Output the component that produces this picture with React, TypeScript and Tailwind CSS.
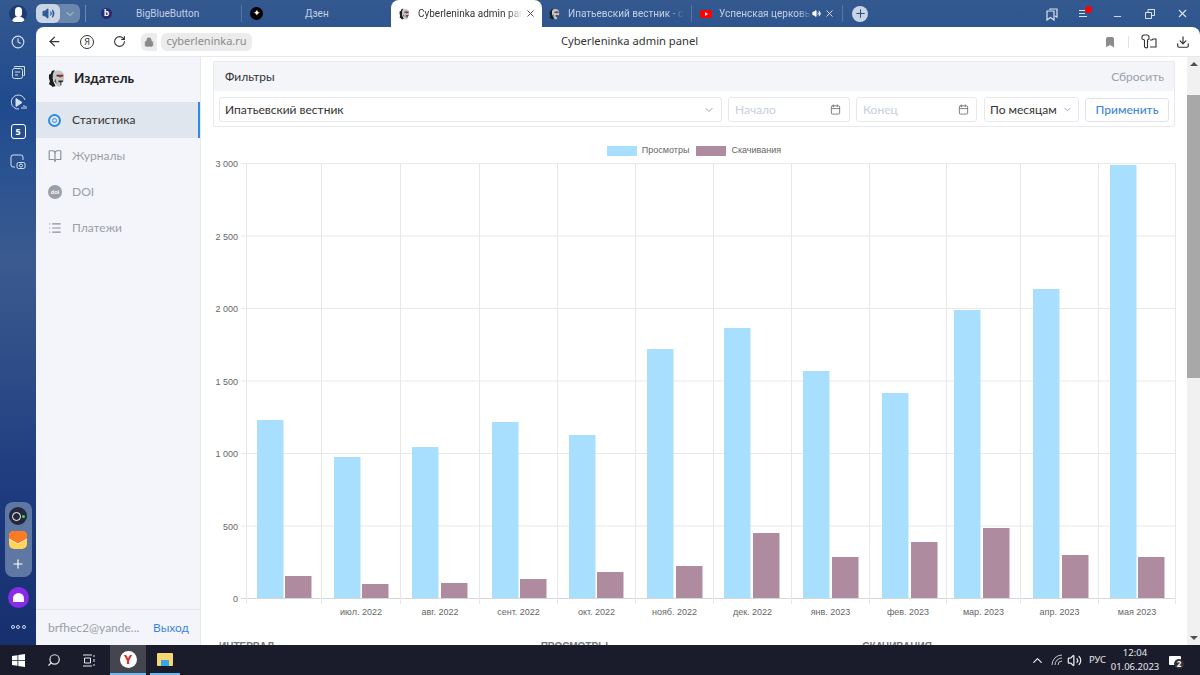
import { ArrowLeft, BookOpen, Bookmark, Calendar, ChevronDown, ChevronUp, Clock, Download, List, Lock, Minus, Plus, RotateCw, Search, Volume2, X } from 'lucide-react';

const months = ['', 'июл. 2022', 'авг. 2022', 'сент. 2022', 'окт. 2022', 'нояб. 2022', 'дек. 2022', 'янв. 2023', 'фев. 2023', 'мар. 2023', 'апр. 2023', 'мая 2023'];
const gridX = [246.5, 321.5, 400.5, 479.5, 557.5, 635.5, 713.5, 791.5, 869.5, 946.5, 1020.5, 1098.5, 1175.5];
const viewBars = [
  [257, 420], [334, 457], [412, 447], [492, 422], [569, 435], [647, 349],
  [724, 328], [803, 371], [882, 393], [954, 310], [1033, 289], [1110, 165],
];
const downloadBars = [
  [285, 576], [362, 584], [441, 583], [520, 579], [597, 572], [676, 566],
  [753, 533], [832, 557], [911, 542], [983, 528], [1062, 555], [1138, 557],
];
const yTicks = [
  ['3 000', 163.5], ['2 500', 236], ['2 000', 308.5], ['1 500', 381], ['1 000', 453.5], ['500', 526], ['0', 598.5],
] as const;

function Skull({ size = 14 }: { size?: number }) {
  return (
    <svg width={size} height={size} viewBox="0 0 20 20" className="shrink-0">
      <path d="M1 6l2-1 1-3 3-1-1 5-1 4 1 4 2 4-3 1-2-2-2-1 1-3-1-3z" fill="#1d1d1d" />
      <path d="M6 3c2-2 7-2 9 0 2 2 2 5 2 7l-1 3-2 1v3l-2 2-3-1-2-4-2-4 0-4z" fill="#c4c6c8" />
      <path d="M9 6h7v2h-7z" fill="#3a3a3a" />
      <circle cx="13" cy="7.500" r="1.500" fill="#d81f1f" />
      <path d="M11 12h5v1l-1 1h-1v3h-1v-3h-2z" fill="#2c2c2c" />
      <path d="M8 10l1 6-2-3z" fill="#4d4d4d" />
    </svg>
  );
}

function Tabs() {
  return (
    <div className="flex h-[27px] items-center text-[10px] text-[#c3d0e4] font-['Roboto',sans-serif]">
      <div className="flex h-[19px] w-[44px] items-center rounded-md bg-[#6b86ad]">
        <div className="flex h-[19px] w-[24px] items-center justify-center rounded-md bg-[#c9d4e4]">
          <Volume2 size={13} className="text-[#2f5a96]" fill="#2f5a96" />
        </div>
        <ChevronDown size={12} className="ml-[4px] text-[#c9d4e4]" />
      </div>
      <div className="ml-[5px] h-[17px] w-px bg-[#6f8ab0]" />
      <div className="ml-[15px] flex h-[11px] w-[11px] items-center justify-center rounded-full bg-[#2a2a70] text-[9px] font-bold leading-none text-white">b</div>
      <span className="ml-[24px] w-[62px] whitespace-nowrap">BigBlueButton</span>
      <div className="ml-[43px] h-[17px] w-px bg-[#55749f]" />
      <div className="ml-[8px] flex h-[13px] w-[13px] items-center justify-center rounded-full bg-black text-[9px] leading-none text-white">✦</div>
      <span className="ml-[42px] w-[22px]">Дзен</span>
      <div className="ml-[64px] flex h-[27px] w-[151px] items-center rounded-t-lg bg-white pl-[8px] text-[#333]">
        <Skull size={12} />
        <span className="ml-[7px] w-[105px] overflow-hidden whitespace-nowrap [mask-image:linear-gradient(90deg,#000_85%,transparent)]">Cyberleninka admin panel</span>
        <X size={11} className="ml-[2px] text-[#444]" />
      </div>
      <div className="ml-[7px]"><Skull size={12} /></div>
      <span className="ml-[7px] w-[117px] overflow-hidden whitespace-nowrap [mask-image:linear-gradient(90deg,#000_85%,transparent)]">Ипатьевский вестник - статистика</span>
      <div className="ml-[6px] h-[17px] w-px bg-[#55749f]" />
      <div className="ml-[8px] flex h-[8px] w-[12px] items-center justify-center rounded-[2px] bg-[#f00]">
        <div className="h-0 w-0 border-y-[2px] border-l-[3px] border-y-transparent border-l-white" />
      </div>
      <span className="ml-[7px] w-[93px] overflow-hidden whitespace-nowrap [mask-image:linear-gradient(90deg,#000_85%,transparent)]">Успенская церковь села</span>
      <Volume2 size={9} className="text-white" fill="#fff" />
      <X size={11} className="ml-[3px] text-[#dde5f0]" />
      <div className="ml-[7px] h-[17px] w-px bg-[#55749f]" />
      <div className="ml-[9px] flex h-[16px] w-[16px] items-center justify-center rounded-full bg-[#c9d4e4]">
        <Plus size={13} className="text-[#2f4f80]" />
      </div>
      <div className="ml-auto flex items-center text-[#dbe3ef]">
        <svg width="14" height="14" viewBox="0 0 14 14" fill="none" stroke="currentColor" strokeWidth="1.2">
          <path d="M5 3V2h7v8l-2-1" />
          <path d="M2 4h7v9l-3.5-2.5L2 13z" />
        </svg>
        <div className="relative ml-[20px] flex w-[13px] flex-col gap-[2px]">
          <div className="h-px w-[8px] bg-current" />
          <div className="h-px w-[6px] bg-current" />
          <div className="h-px w-[8px] bg-current" />
          <div className="absolute left-[6px] top-[-4px] h-[7px] w-[7px] rounded-full bg-[#f00]" />
        </div>
        <Minus size={11} className="ml-[20px] mt-[6px]" />
        <svg width="10" height="10" viewBox="0 0 10 10" fill="none" stroke="currentColor" className="ml-[22px]">
          <path d="M.5 3.5h6v6h-6zM3 3V.5h6.5v6H7" />
        </svg>
        <X size={13} className="ml-[21px] mr-[11px]" />
      </div>
    </div>
  );
}

function AddressBar() {
  return (
    <div className="flex h-[30px] shrink-0 items-center border-b border-[#e8e9ee] text-[#333]">
      <ArrowLeft size={15} className="ml-[11px]" />
      <div className="ml-[18px] flex h-[14px] w-[14px] items-center justify-center rounded-full border border-[#333] text-[9px] leading-none">Я</div>
      <RotateCw size={13} className="ml-[19px]" />
      <div className="ml-[15px] flex h-[18px] w-[16px] items-center justify-center rounded-l-md bg-[#ececec]">
        <Lock size={10} className="text-[#8a8a8a]" fill="#8a8a8a" />
      </div>
      <div className="ml-[4px] flex h-[18px] w-[91px] items-center justify-center rounded-md bg-[#ececec] text-[11px] text-[#8b8b8b] font-['Noto_Sans',sans-serif]">cyberleninka.ru</div>
      <div className="flex-1 pr-[97px] text-center text-[11.200px] text-[#333] font-['Noto_Sans',sans-serif]">Cyberleninka admin panel</div>
      <Bookmark size={12} className="text-[#8c8c8c]" fill="#8c8c8c" />
      <div className="ml-[12px] h-[12px] w-px bg-[#e2e2e2]" />
      <svg width="16" height="15" viewBox="0 0 16 15" fill="none" stroke="#333" strokeWidth="1.1" className="ml-[12px]">
        <path d="M1 3a2 2 0 0 1 2-2h3a2 2 0 0 1 2 2v2L6.500 6v7.500L5 14 3.500 13V6L1 5z" />
        <path d="M9 6h2l1-1h3v8H9" />
      </svg>
      <Download size={14} className="ml-[19px] mr-[10px] text-[#333]" />
    </div>
  );
}

function Sidebar() {
  return (
    <aside className="flex w-[165px] shrink-0 flex-col border-r border-[#e6e8ef] bg-[#f3f5fa] font-['Lato','Noto_Sans',sans-serif]">
      <div className="flex h-[45px] shrink-0 items-center pb-[2px] pl-[12px]">
        <Skull size={19} />
        <span className="ml-[7px] text-[13.500px] font-bold text-[#222]">Издатель</span>
      </div>
      <div className="flex h-[36px] items-center border-r-2 border-[#2b8be8] bg-[#e0e6ee] pl-[12px] text-[12px] text-[#333]">
        <div className="flex h-[13px] w-[13px] items-center justify-center rounded-full border-[2px] border-[#2b8be8]">
          <div className="h-[5px] w-[5px] rounded-full border border-[#2b8be8]" />
        </div>
        <span className="ml-[11px]">Статистика</span>
      </div>
      <div className="flex h-[36px] items-center pl-[12px] text-[12px] text-[#9a9ea6]">
        <BookOpen size={14} className="text-[#8b8f96]" />
        <span className="ml-[10px]">Журналы</span>
      </div>
      <div className="flex h-[36px] items-center pl-[12px] text-[12px] text-[#9a9ea6]">
        <div className="flex h-[14px] w-[14px] items-center justify-center rounded-full bg-[#9a9ea6] text-[6px] font-bold leading-none text-white">doi</div>
        <span className="ml-[10px]">DOI</span>
      </div>
      <div className="flex h-[36px] items-center pl-[12px] text-[12px] text-[#9a9ea6]">
        <List size={14} className="text-[#8b8f96]" />
        <span className="ml-[10px]">Платежи</span>
      </div>
      <div className="mt-auto flex h-[36px] items-center border-t border-[#e3e5ec] pl-[12px] text-[12px]">
        <span className="w-[105px] text-[#9a9ea6]">brfhec2@yande...</span>
        <span className="text-[#3d86e0]">Выход</span>
      </div>
    </aside>
  );
}

function Filters() {
  return (
    <div className="mx-[12px] mt-[4px] rounded-[2px] border border-[#e7e9ef] font-['Lato','Noto_Sans',sans-serif] text-[12px]">
      <div className="flex h-[29px] items-center justify-between bg-[#f3f5f8] pl-[11px] pr-[10px]">
        <span className="text-[#333]">Фильтры</span>
        <span className="text-[#9ca1a8]">Сбросить</span>
      </div>
      <div className="flex h-[35px] items-center gap-[6px] px-[5px] pt-[2px]">
        <div className="flex h-[25px] w-[503px] items-center justify-between rounded-[3px] border border-[#e6e8ee] pl-[5px] pr-[6px] text-[#333]">
          Ипатьевский вестник
          <ChevronDown size={12} className="text-[#9a9ea6]" />
        </div>
        <div className="flex h-[25px] w-[122px] items-center justify-between rounded-[3px] border border-[#e6e8ee] pl-[6px] pr-[8px] text-[#c6d0dc]">
          Начало
          <Calendar size={11} className="text-[#777]" />
        </div>
        <div className="flex h-[25px] w-[121px] items-center justify-between rounded-[3px] border border-[#e6e8ee] pl-[6px] pr-[7px] text-[#c6d0dc]">
          Конец
          <Calendar size={11} className="text-[#777]" />
        </div>
        <div className="ml-px flex h-[25px] w-[95px] items-center justify-between whitespace-nowrap rounded-[3px] border border-[#e6e8ee] pl-[5px] pr-[5px] text-[#333]">
          По месяцам
          <ChevronDown size={11} className="text-[#9a9ea6]" />
        </div>
        <div className="flex h-[24px] w-[84px] items-center justify-center rounded-[3px] border border-[#dfe3ea] font-medium text-[#3d86e0]">Применить</div>
      </div>
    </div>
  );
}

function Chart() {
  return (
    <div className="font-['Liberation_Sans',sans-serif]">
      <div className="mt-[16px] flex h-[15px] items-center justify-center gap-[5px] text-[9px] text-[#666]">
        <div className="h-[10px] w-[30px] bg-[#a9dffe]" />
        <span>Просмотры</span>
        <div className="ml-[2px] h-[10px] w-[30px] bg-[#af8b9f]" />
        <span>Скачивания</span>
      </div>
      <svg width="986" height="473" viewBox="201 158 986 473" className="block">
        {yTicks.map(([label, y]) => (
          <g key={label}>
            <line x1="241" x2="1175.5" y1={y} y2={y} stroke={label === '0' ? '#d6d6d6' : '#e8e8e8'} />
            <text x="238" y={y + 3.5} textAnchor="end" fontSize="9" fill="#666">{label}</text>
          </g>
        ))}
        {gridX.map((x) => (
          <line key={x} x1={x} x2={x} y1="163" y2="604" stroke="#e8e8e8" />
        ))}
        {viewBars.map(([x, y]) => (
          <rect key={x} x={x} y={y} width="26.500" height={598 - y} fill="#a9dffe" />
        ))}
        {downloadBars.map(([x, y]) => (
          <rect key={x} x={x} y={y} width="26.500" height={598 - y} fill="#af8b9f" />
        ))}
        {months.map((m, i) => (
          <text key={m + i} x={(gridX[i] + gridX[i + 1]) / 2} y="615" textAnchor="middle" fontSize="9" fill="#666">{m}</text>
        ))}
      </svg>
    </div>
  );
}

function Rail() {
  return (
    <div className="flex w-[36px] shrink-0 flex-col items-center text-[#d4deec]">
      <div className="relative mt-[5px] h-[18px] w-[18px] overflow-hidden rounded-full bg-[#1d3d72]">
        <div className="absolute left-[6px] top-[2px] h-[10px] w-[7px] rounded-full bg-white" />
        <div className="absolute left-[3px] top-[12px] h-[5px] w-[13px] rounded-t-md bg-white" />
      </div>
      <Clock size={14} className="mt-[12px]" />
      <svg width="15" height="15" viewBox="0 0 15 15" fill="none" stroke="currentColor" className="mt-[16px]">
        <path d="M3.500 2.500V1.500h10v9h-1" />
        <rect x="1.500" y="3.500" width="10" height="10" rx="2" />
        <path d="M4 7h5M4 10h3" />
      </svg>
      <svg width="17" height="17" viewBox="0 0 17 17" fill="none" stroke="currentColor" className="mt-[14px]">
        <path d="M15 6A7 7 0 1 0 9 15" />
        <path d="M6 4.500l6 4-6 4z" fill="currentColor" />
        <path d="M12 15v-2M14 15v-4M16 15v-3" />
      </svg>
      <div className="mt-[13px] flex h-[15px] w-[15px] items-center justify-center rounded-[3px] border border-current text-[9px] font-bold leading-none text-white">5</div>
      <svg width="16" height="16" viewBox="0 0 16 16" fill="none" stroke="currentColor" className="mt-[15px]">
        <path d="M5 13H3a2 2 0 0 1-2-2V3a2 2 0 0 1 2-2h8a2 2 0 0 1 2 2v3" />
        <rect x="7" y="8.500" width="8" height="6" rx="1.500" />
        <circle cx="11" cy="11.500" r="1.500" />
      </svg>
      <div className="mt-auto flex h-[75px] w-[27px] flex-col items-center rounded-lg bg-[#5f78a3]">
        <div className="mt-[5px] flex h-[18px] w-[18px] items-center justify-center gap-px rounded-full bg-[#24283c]">
          <div className="h-[9px] w-[9px] rounded-full border border-white" />
          <div className="h-[3px] w-[3px] rounded-full bg-[#3ee04a]" />
        </div>
        <svg width="18" height="18" viewBox="0 0 18 18" className="mt-[6px]">
          <rect width="18" height="18" rx="5" fill="#ffd45a" />
          <path d="M0 5a5 5 0 0 1 5-5h8a5 5 0 0 1 5 5v3l-9 5-9-5z" fill="#fb7a24" />
          <path d="M0 8l9 5 9-5" fill="none" stroke="#fff3c4" />
        </svg>
        <Plus size={14} className="mt-[8px] text-white" />
      </div>
      <div className="mt-[10px] flex h-[21px] w-[21px] items-center justify-center rounded-full bg-[#8a2be8]">
        <div className="h-[9px] w-[11px] rounded-t-full bg-white" />
      </div>
      <div className="mb-[16px] mt-[17px] flex gap-[1.500px]">
        <div className="h-[4px] w-[4px] rounded-full border border-[#d4deec]" />
        <div className="h-[4px] w-[4px] rounded-full border border-[#d4deec]" />
        <div className="h-[4px] w-[4px] rounded-full border border-[#d4deec]" />
      </div>
    </div>
  );
}

function Taskbar() {
  return (
    <div className="flex h-[30px] shrink-0 items-center bg-[#1b1c2b] text-[#e8e8ec] font-['Noto_Sans',sans-serif]">
      <svg width="13" height="13" viewBox="0 0 13 13" fill="#fff" className="ml-[12px]">
        <path d="M0 2l5.500-.8V6H0zM6.300 1l6.700-1v6H6.300zM0 6.800h5.500v4.900L0 11zM6.300 6.800H13V13l-6.700-1z" />
      </svg>
      <Search size={14} className="ml-[22px] -scale-x-100 text-[#e8e8ec]" />
      <svg width="13" height="13" viewBox="0 0 13 13" fill="none" stroke="#e8e8ec" className="ml-[22px]">
        <path d="M0 1h9M0 12h9M1.500 4h6v5h-6zM11 1v2M11 5v3M11 10v2" />
      </svg>
      <div className="ml-[14px] flex h-[30px] w-[36px] items-center justify-center border-b-2 border-[#6cb7ee] bg-[#45454f]">
        <div className="flex h-[17px] w-[17px] items-center justify-center rounded-full bg-white text-[13px] font-bold leading-none text-[#e02020]">Y</div>
      </div>
      <div className="ml-[4px] flex h-[30px] w-[30px] items-center justify-center border-b-2 border-[#6cb7ee]">
        <div className="relative h-[13px] w-[16px] rounded-[1px] bg-[#f7d774]">
          <div className="absolute bottom-0 left-[4px] h-[6px] w-[8px] bg-[#39a6e6]" />
        </div>
      </div>
      <div className="ml-auto flex items-center">
        <ChevronUp size={15} />
        <svg width="13" height="12" viewBox="0 0 13 12" fill="none" stroke="#c9c9d0" className="ml-[6px]">
          <path d="M1 11a10 10 0 0 1 10-10M4 11a7 7 0 0 1 7-7M7 11a4 4 0 0 1 4-4" />
        </svg>
        <Volume2 size={15} className="ml-[3px]" />
        <span className="ml-[7px] w-[17px] whitespace-nowrap text-[9.500px]">РУС</span>
        <div className="ml-[5px] flex w-[48px] flex-col items-center text-[9.500px] leading-[14px]">
          <span>12:04</span>
          <span>01.06.2023</span>
        </div>
        <div className="relative ml-[10px] mr-[19px] h-[9px] w-[12px] rounded-[1px] bg-white">
          <div className="absolute left-[5px] top-[3px] flex h-[10px] w-[10px] items-center justify-center rounded-full bg-[#333] text-[8px] font-bold leading-none text-white">2</div>
        </div>
      </div>
    </div>
  );
}

export default function App() {
  return (
    <div className="flex h-[675px] w-[1200px] flex-col overflow-hidden">
      <div className="flex min-h-0 flex-1 bg-[linear-gradient(180deg,#34598f_0%,#1f4a8e_16%,#2a5291_26%,#3b5a90_41%,#1c3a7d_78%,#17306f_100%)]">
        <Rail />
        <div className="flex min-w-0 flex-1 flex-col">
          <Tabs />
          <div className="flex min-h-0 flex-1 flex-col overflow-hidden rounded-t-lg bg-white">
            <AddressBar />
            <div className="flex min-h-0 flex-1">
              <Sidebar />
              <main className="min-w-0 flex-1 overflow-hidden">
                <Filters />
                <Chart />
                <div className="mt-[9px] grid grid-cols-3 pl-[18px] pr-[3px] font-['Liberation_Sans',sans-serif] text-[10px] font-bold leading-[14px] text-[#777]">
                  <span>ИНТЕРВАЛ</span>
                  <span>ПРОСМОТРЫ</span>
                  <span>СКАЧИВАНИЯ</span>
                </div>
              </main>
              <div className="flex w-[13px] shrink-0 flex-col items-center bg-[#f1f1f1]">
                <div className="mt-[5px] h-0 w-0 border-x-[4px] border-b-[4px] border-x-transparent border-b-[#505050]" />
                <div className="mt-[29px] h-[283px] w-full bg-[#a8a8a8]" />
                <div className="mb-[5px] mt-auto h-0 w-0 border-x-[4px] border-t-[4px] border-x-transparent border-t-[#505050]" />
              </div>
            </div>
          </div>
        </div>
      </div>
      <Taskbar />
    </div>
  );
}
